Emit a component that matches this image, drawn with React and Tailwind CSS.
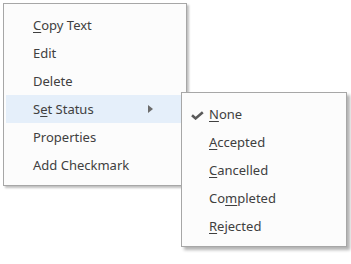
import React from "react";

const mainItems = [
  { label: "Copy Text", u: 0 },
  { label: "Edit" },
  { label: "Delete" },
  { label: "Set Status", u: 1, sub: true, active: true },
  { label: "Properties" },
  { label: "Add Checkmark" },
];

const statusItems = [
  { label: "None", u: 0, checked: true },
  { label: "Accepted", u: 0 },
  { label: "Cancelled", u: 0 },
  { label: "Completed", u: 2 },
  { label: "Rejected", u: 0 },
];

function Label({ text, u }) {
  if (u === undefined) return <span>{text}</span>;
  return (
    <span>
      {text.slice(0, u)}
      <span className="underline underline-offset-2 decoration-1">{text[u]}</span>
      {text.slice(u + 1)}
    </span>
  );
}

function Check() {
  return (
    <svg width="13" height="9" viewBox="0 0 13 9" className="text-[#5a5a5a]">
      <path d="M1 4.2 L4.6 7.4 L11.8 1.2" fill="none" stroke="currentColor" strokeWidth="2.6" />
    </svg>
  );
}

export default function App() {
  return (
    <div
      className="relative w-[351px] h-[264px] bg-white text-[13px] text-[#404040]"
      style={{ fontFamily: '"Segoe UI", "Noto Sans", sans-serif' }}
    >
      <div className="absolute left-[3px] top-[3px] w-[184px] border border-[#a7a7a7] bg-[#fcfcfc] pt-[7px] pb-[6px] px-[2px] shadow-[2px_2px_2px_rgba(0,0,0,0.25)]">
        {mainItems.map((it) => (
          <div
            key={it.label}
            className={`h-[28px] flex items-center pt-[2px] pl-[27px] pr-[31px] ${it.active ? "bg-[#e5effa]" : ""}`}
          >
            <div className="flex-1">
              <Label text={it.label} u={it.u} />
            </div>
            {it.sub && (
              <svg width="5" height="8" viewBox="0 0 5 8" className="-mt-[2px]">
                <path d="M0 0 L5 4 L0 8 Z" fill="#6b6b6b" />
              </svg>
            )}
          </div>
        ))}
      </div>

      <div className="absolute left-[181px] top-[92px] w-[166px] border border-[#a7a7a7] bg-[#fcfcfc] pt-[7px] pb-[6px] shadow-[3px_3px_3px_rgba(0,0,0,0.3)]">
        {statusItems.map((it) => (
          <div key={it.label} className="h-[28px] flex items-center pt-[2px]">
            <div className="w-[27px] flex justify-end pr-[5px]">{it.checked && <Check />}</div>
            <Label text={it.label} u={it.u} />
          </div>
        ))}
      </div>
    </div>
  );
}
